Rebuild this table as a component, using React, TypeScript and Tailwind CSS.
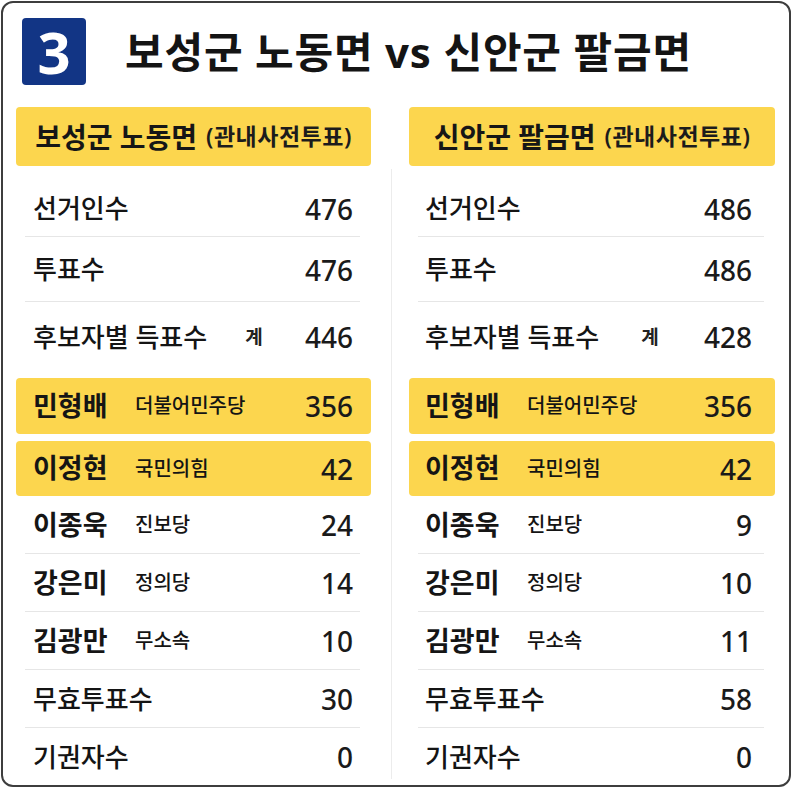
import React from "react";

type Row =
  | { kind: "stat"; label: string; value: string; sub?: string }
  | { kind: "cand"; name: string; party: string; value: string; hl?: boolean };

interface ColumnData {
  title: string;
  rows: Row[];
}

const left: ColumnData = {
  title: "보성군 노동면",
  rows: [
    { kind: "stat", label: "선거인수", value: "476" },
    { kind: "stat", label: "투표수", value: "476" },
    { kind: "stat", label: "후보자별 득표수", sub: "계", value: "446" },
    { kind: "cand", name: "민형배", party: "더불어민주당", value: "356", hl: true },
    { kind: "cand", name: "이정현", party: "국민의힘", value: "42", hl: true },
    { kind: "cand", name: "이종욱", party: "진보당", value: "24" },
    { kind: "cand", name: "강은미", party: "정의당", value: "14" },
    { kind: "cand", name: "김광만", party: "무소속", value: "10" },
    { kind: "stat", label: "무효투표수", value: "30" },
    { kind: "stat", label: "기권자수", value: "0" },
  ],
};

const right: ColumnData = {
  title: "신안군 팔금면",
  rows: [
    { kind: "stat", label: "선거인수", value: "486" },
    { kind: "stat", label: "투표수", value: "486" },
    { kind: "stat", label: "후보자별 득표수", sub: "계", value: "428" },
    { kind: "cand", name: "민형배", party: "더불어민주당", value: "356", hl: true },
    { kind: "cand", name: "이정현", party: "국민의힘", value: "42", hl: true },
    { kind: "cand", name: "이종욱", party: "진보당", value: "9" },
    { kind: "cand", name: "강은미", party: "정의당", value: "10" },
    { kind: "cand", name: "김광만", party: "무소속", value: "11" },
    { kind: "stat", label: "무효투표수", value: "58" },
    { kind: "stat", label: "기권자수", value: "0" },
  ],
};

// heights of each row, top to bottom (px)
const rowHeights = [
  "h-[57px] mt-[14px]",
  "h-[65px]",
  "h-[70px]",
  "h-[56px] mt-[6px]",
  "h-[55px] mt-[7px]",
  "h-[58px]",
  "h-[58px]",
  "h-[58px]",
  "h-[58px]",
  "h-[58px]",
];

// draw a separator line under these rows
const lineAfter = [0, 1, 5, 6, 7, 8];

const Column = ({ data, side }: { data: ColumnData; side: "l" | "r" }) => {
  const pad = side === "l" ? "pl-[17px] pr-[18px]" : "pl-[16px] pr-[23px]";
  return (
    <div className={side === "l" ? "w-[355px]" : "w-[366px]"}>
      <div className="h-[59px] rounded-[4px] bg-[#fcd64e] flex items-center justify-center gap-[9px]">
        <span className="text-[28px] font-bold text-[#161616]">{data.title}</span>
        <span className="text-[23px] font-semibold text-[#1c1c1c] tracking-[0.5px]">(관내사전투표)</span>
      </div>
      {data.rows.map((row, i) => {
        const hl = row.kind === "cand" && row.hl;
        return (
          <div key={i} className={`relative ${rowHeights[i]}`}>
            <div
              className={`h-full flex items-center ${pad} ${hl ? "bg-[#fcd64e] rounded-[4px]" : ""}`}
            >
              {row.kind === "stat" ? (
                <>
                  <span className="text-[26px] font-medium text-[#141414]">{row.label}</span>
                  {row.sub && (
                    <span
                      className={`text-[19px] font-semibold text-[#222] ${side === "l" ? "ml-[38px]" : "ml-[42px]"}`}
                    >
                      {row.sub}
                    </span>
                  )}
                </>
              ) : (
                <>
                  <span className="w-[102px] text-[27px] font-bold text-[#151515]">{row.name}</span>
                  <span className="text-[20px] font-medium text-[#141414]">{row.party}</span>
                </>
              )}
              <span className="ml-auto text-[28px] font-medium text-[#1a1a1a] tabular-nums">
                {row.value}
              </span>
            </div>
            {lineAfter.includes(i) && (
              <div className="absolute bottom-0 left-[9px] right-[11px] h-px bg-[#e6e6e6]" />
            )}
          </div>
        );
      })}
    </div>
  );
};

export default function App() {
  return (
    <div
      className="w-[800px] h-[792px] bg-white pt-px pl-px"
      style={{ fontFamily: '"Noto Sans", "Noto Sans CJK KR", sans-serif' }}
    >
      <div className="w-[790px] h-[786px] rounded-[12px] border-2 border-[#3d3d3d] bg-white">
        <div className="flex items-center pl-[19px] pt-[15px]">
          <div className="w-[64px] h-[67px] rounded-[4px] bg-[#123585] flex items-center justify-center">
            <span className="text-[58px] font-bold text-white leading-none">3</span>
          </div>
          <h1 className="ml-[39px] text-[42px] font-bold text-[#141414] tracking-[0.8px]">
            보성군 노동면 vs 신안군 팔금면
          </h1>
        </div>
        <div className="flex pl-[13px] mt-[22px]">
          <Column data={left} side="l" />
          <div className="ml-[20px] mt-[62px] w-px h-[610px] bg-[#ececec]" />
          <div className="ml-[17px]">
            <Column data={right} side="r" />
          </div>
        </div>
      </div>
    </div>
  );
}
